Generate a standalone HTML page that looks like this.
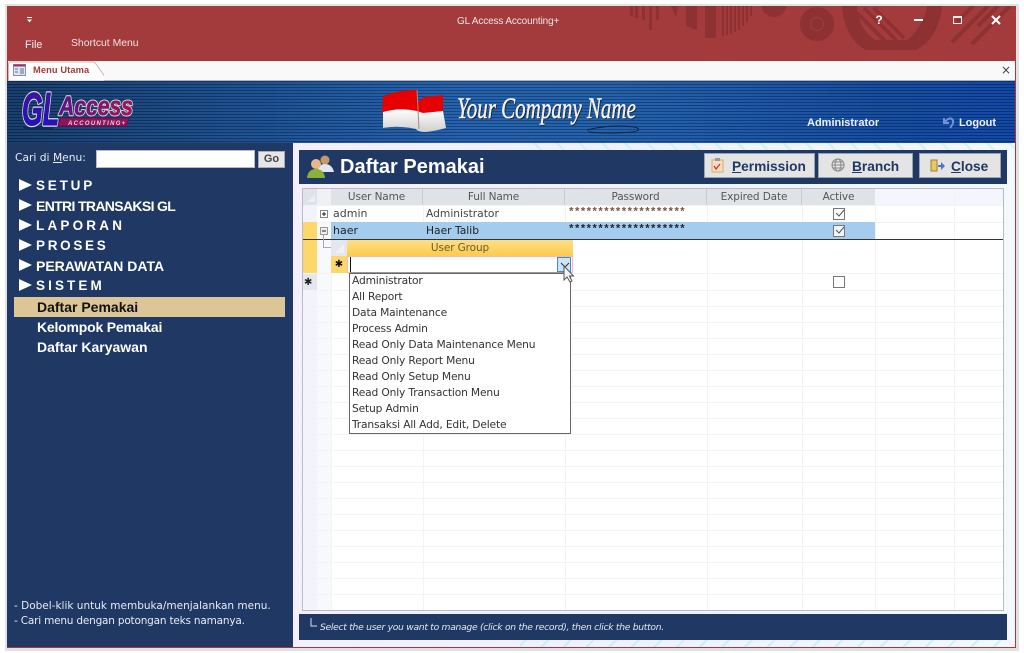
<!DOCTYPE html>
<html><head><meta charset="utf-8"><style>
html,body{margin:0;padding:0;background:#fff;}
body{width:1024px;height:653px;overflow:hidden;position:relative;font-family:"DejaVu Sans","Liberation Sans",sans-serif;}
div,span{position:absolute;white-space:nowrap;}
span.u{position:static;text-decoration:underline;}
.m{left:36px;color:#fff;font-weight:bold;font-size:13.5px;line-height:20px;height:20px;font-family:"Liberation Sans",sans-serif;}
.tri{left:19px;width:0;height:0;border-left:13px solid #fff;border-top:6px solid transparent;border-bottom:6px solid transparent;}
.sm{left:37px;color:#fff;font-weight:bold;font-size:14px;line-height:20px;font-family:"Liberation Sans",sans-serif;}
.hd{top:189px;height:16px;background:#dfe3e8;color:#555;font-size:10.5px;letter-spacing:-.12px;line-height:17px;text-align:center;font-family:"DejaVu Sans",sans-serif;border-right:1px solid #c8ccd0;box-sizing:border-box;}
.c{font-size:11px;line-height:16px;color:#444;}
.pw{left:568px;font:bold 11px/13px 'Liberation Mono';letter-spacing:-.75px;}
.btn{top:153px;height:25px;background:#e4e4e4;border:1px solid #9aa3b0;box-sizing:border-box;color:#1f3864;font-weight:bold;font-size:13.7px;line-height:25px;font-family:"Liberation Sans",sans-serif;}
.dd{left:352px;font-size:10.7px;letter-spacing:-.17px;line-height:16px;color:#333;}
.cb{width:10px;height:10px;border:1px solid #777;background:#fff;left:833px;}
</style></head><body>
<!-- shadow -->
<div style="left:5px;top:4px;width:1014px;height:647px;background:#e2e2e2;"></div>
<div style="left:7px;top:6px;width:1009px;height:642px;background:#a33a3c;"></div>
<!-- titlebar -->
<svg style="position:absolute;left:0;top:0" width="1024" height="61">
<defs><clipPath id="t"><rect x="630" y="6" width="386" height="54"/></clipPath></defs>
<g clip-path="url(#t)" fill="#8d3133">
<rect x="630" y="6" width="3" height="10"/><rect x="635" y="6" width="3" height="12"/><rect x="642" y="6" width="3" height="14"/><rect x="649" y="6" width="3" height="24"/><rect x="656" y="6" width="3" height="14"/>
<path d="M671 6h7l-2 11z"/>
<path d="M686 6h11v24l-11-4z"/><rect x="705" y="6" width="11" height="32"/>
<rect x="722" y="6" width="2" height="30"/><rect x="726" y="6" width="2" height="29"/><rect x="730" y="6" width="2" height="28"/><rect x="734" y="6" width="2" height="26"/><rect x="738" y="6" width="2" height="24"/><rect x="742" y="6" width="2" height="20"/><rect x="746" y="6" width="2" height="16"/><rect x="750" y="6" width="2" height="10"/>
<path d="M762 6h24a12 11 0 0 1-24 0z"/>
<circle cx="817" cy="24" r="12" fill="none" stroke="#8d3133" stroke-width="10"/><circle cx="817" cy="24" r="6"/>
<path d="M842 6h100c-2 24-14 38-26 44h-50c-12-6-22-20-24-44z"/>
<path d="M857 6h70c-2 16-14 30-20 34h-32c-10-6-18-20-18-34z" fill="#a33a3c"/>
<g stroke="#8d3133" stroke-width="3.5"><path d="M854 10l34 34M864 8l34 34M874 8l30 30"/></g>
<g stroke="#8d3133" stroke-width="4"><path d="M952 42l36-36M957 22l16-16M972 44l38-38M978 26l20-20"/></g>
</g>
<g fill="#fff"><rect x="27" y="17" width="5" height="1"/><path d="M27 19.500h5l-2.500 3z"/></g>
<text x="879" y="24" fill="#fff" font-family="Liberation Sans" font-weight="bold" font-size="12" text-anchor="middle">?</text>
<rect x="914" y="19" width="9" height="2" fill="#fff"/>
<rect x="953.500" y="16.500" width="8" height="7" fill="none" stroke="#eee"/><rect x="953" y="16" width="9" height="2" fill="#eee"/>
<path d="M992 16l8 8M1000 16l-8 8" stroke="#fff" stroke-width="2"/>
</svg>
<div style="left:457px;top:15px;color:#f2e4e4;font:10px/14px 'Liberation Sans';letter-spacing:-.13px;">GL Access Accounting+</div>
<div style="left:25px;top:38px;color:#fbeeee;font:10.800px/14px 'Liberation Sans';">File</div>
<div style="left:71px;top:37px;color:#f5e6e6;font:10.400px/14px 'Liberation Sans';">Shortcut Menu</div>
<!-- tab bar -->
<div style="left:8px;top:61px;width:1007px;height:19px;background:#f9f9f9;border-bottom:1px solid #b5b5b5;"></div>
<svg style="position:absolute;left:8px;top:60px" width="96" height="21"><path d="M0.500 21V4q0-2 2-2H85q2 0 3 2l12 17z" fill="#fff" stroke="#c9b5b5"/></svg>
<svg style="position:absolute;left:13px;top:64px" width="14" height="13"><rect x=".5" y=".5" width="12" height="11" fill="#dfe6f2" stroke="#8a8fa8"/><rect x=".5" y=".5" width="12" height="2" fill="#a03060"/><path d="M2 5h3M2 8h3M7 5h4M7 7h4M7 9h4" stroke="#5570a0"/></svg>
<div style="left:33px;top:64px;color:#a33a3c;font-size:9.300px;font-weight:bold;line-height:13px;font-family:'Liberation Sans';letter-spacing:.1px;">Menu Utama</div>
<div style="left:1001px;top:64px;color:#444;font-size:12px;line-height:12px;">×</div>
<!-- banner -->
<div style="left:7px;top:81px;width:1008px;height:62px;background:repeating-linear-gradient(180deg,rgba(0,0,0,.22) 0 1px,rgba(255,255,255,.05) 1px 3px),linear-gradient(90deg,#0f3566 0,#14498c 25%,#1c5aa8 45%,#1a5aa6 60%,#0d469a 85%,#063f9e 100%);"></div>
<!-- logo -->
<svg style="position:absolute;left:15px;top:84px" width="125" height="50" font-family="Liberation Sans" font-weight="bold" font-style="italic">
<defs>
<linearGradient id="g1" x1="0" y1="0" x2="0" y2="1"><stop offset="0" stop-color="#4a1490"/><stop offset="1" stop-color="#1a10c8"/></linearGradient>
<linearGradient id="g2" x1="0" y1="0" x2="1" y2="0"><stop offset="0" stop-color="#4a1a90"/><stop offset="1" stop-color="#a81450"/></linearGradient>
</defs>
<path d="M8 43h32l-2 2H10z" fill="#0a1c40" opacity=".6"/>
<text x="7" y="41" font-size="46" textLength="37" lengthAdjust="spacingAndGlyphs" fill="url(#g1)" stroke="#dcdcdc" stroke-width="3.500" paint-order="stroke" stroke-linejoin="round">GL</text>
<text x="7" y="41" font-size="46" textLength="37" lengthAdjust="spacingAndGlyphs" fill="url(#g1)" stroke="#2a12a8" stroke-width="1">GL</text>
<text x="44" y="31" font-size="27" textLength="74" lengthAdjust="spacingAndGlyphs" fill="url(#g2)" stroke="#dcdcdc" stroke-width="2.500" paint-order="stroke" stroke-linejoin="round">Access</text>
<text x="44" y="31" font-size="27" textLength="74" lengthAdjust="spacingAndGlyphs" fill="url(#g2)" stroke="#8a1466" stroke-width=".6">Access</text>
<path d="M46 34h68l-3 8H43z" fill="#90145a" stroke="#70104a"/>
<text x="53" y="41" font-size="6" fill="#e8d0e0" letter-spacing="1.300">ACCOUNTING+</text>
</svg>
<!-- flag -->
<svg style="position:absolute;left:380px;top:87px" width="70" height="47">
<defs><linearGradient id="fw" x1="0" y1="0" x2="0" y2="1"><stop offset="0" stop-color="#fff"/><stop offset="1" stop-color="#cfcfcf"/></linearGradient></defs>
<path d="M3 9Q18 3 37 3L38 15 44 10 63 8 63 26H2z" fill="#e60000"/>
<path d="M3 25Q20 20 37 24L43 26 63 24 66 41Q55 44 46 45 38 45 36 42 18 38 3 41z" fill="url(#fw)"/>
<path d="M37 3 39 42" stroke="#a88" stroke-width="1" fill="none"/>
</svg>
<div style="left:457px;top:89px;color:#f2efe8;font:italic 30px/40px 'Liberation Serif';transform:scaleX(.7);transform-origin:left;-webkit-text-stroke:.4px #fff;text-shadow:1px 1px 1px #111;">Your Company Name</div>
<svg style="position:absolute;left:585px;top:122px" width="60" height="14"><path d="M2 8Q25 2 50 5Q58 8 48 10Q25 12 3 10" fill="none" stroke="#0c2446" stroke-width="1"/></svg>
<div style="left:807px;top:116px;color:#eef;font:bold 11px/14px 'Liberation Sans';">Administrator</div>
<svg style="position:absolute;left:942px;top:115px" width="14" height="14"><path d="M2 3v5h5M3 7Q7 2 10 4q3 3-2 9" fill="none" stroke="#6f93d6" stroke-width="2"/></svg>
<div style="left:959px;top:116px;color:#eef;font:bold 11px/14px 'Liberation Sans';letter-spacing:-.05px;">Logout</div>
<!-- left panel -->
<div style="left:7px;top:143px;width:286px;height:505px;background:#1f3864;"></div>
<div style="left:15px;top:151px;color:#e8ecf4;font-size:10.700px;line-height:14px;">Cari di <span class="u">M</span>enu:</div>
<div style="left:96px;top:150px;width:159px;height:18px;background:#fff;border:1px solid #bbb;box-sizing:border-box;"></div>
<div style="left:258px;top:151px;width:27px;height:17px;background:#e6e6e6;border:1px solid #aaa;box-sizing:border-box;color:#444;font:bold 11px/15px 'Liberation Sans';text-align:center;">Go</div>
<div class="tri" style="top:179px"></div><div class="m" style="top:176px;letter-spacing:2.800px">SETUP</div>
<div class="tri" style="top:199px"></div><div class="m" style="top:196px;font-size:14px;letter-spacing:-.65px">ENTRI TRANSAKSI GL</div>
<div class="tri" style="top:219px"></div><div class="m" style="top:216px;letter-spacing:3.200px">LAPORAN</div>
<div class="tri" style="top:239px"></div><div class="m" style="top:236px;letter-spacing:2.700px">PROSES</div>
<div class="tri" style="top:259px"></div><div class="m" style="top:256px;font-size:14px">PERAWATAN DATA</div>
<div class="tri" style="top:279px"></div><div class="m" style="top:276px;letter-spacing:3.100px">SISTEM</div>
<div style="left:14px;top:297px;width:271px;height:20px;background:#dcc597;"></div>
<div class="sm" style="top:297px;color:#111">Daftar Pemakai</div>
<div class="sm" style="top:317px;letter-spacing:-.2px">Kelompok Pemakai</div>
<div class="sm" style="top:337px">Daftar Karyawan</div>
<div style="left:14px;top:599px;color:#e8ecf4;font-size:10.500px;line-height:15px;">- Dobel-klik untuk membuka/menjalankan menu.</div>
<div style="left:14px;top:614px;color:#e8ecf4;font-size:10.500px;letter-spacing:-.2px;line-height:15px;">- Cari menu dengan potongan teks namanya.</div>
<!-- right -->
<div style="left:293px;top:143px;width:722px;height:505px;background:linear-gradient(90deg,#f6eefc,#eef2fd 50%,#f2f8fc);"></div>
<div style="left:520px;top:143px;width:495px;height:7px;background:repeating-linear-gradient(45deg,transparent 0 14px,rgba(120,220,200,.22) 14px 16px);"></div>
<div style="left:520px;top:640px;width:495px;height:7px;background:repeating-linear-gradient(-45deg,transparent 0 14px,rgba(120,220,220,.28) 14px 16px);"></div>
<div style="left:299px;top:150px;width:708px;height:34px;background:#1f3864;"></div>
<svg style="position:absolute;left:306px;top:153px" width="28" height="26"><circle cx="19" cy="7" r="4.500" fill="#c8986a"/><path d="M11 19Q12 11 19 11T28 19z" fill="#dfe6ee"/><circle cx="10" cy="11" r="5" fill="#e8b888"/><path d="M1 25Q2 16 10 16T19 25z" fill="#8db03c"/></svg>
<div style="left:340px;top:155px;color:#fff;font:bold 20px/24px 'Liberation Sans';">Daftar Pemakai</div>
<div class="btn" style="left:704px;width:111px;"><span style="left:27px;top:0;"><span class="u">P</span>ermission</span></div>
<svg style="position:absolute;left:711px;top:157px" width="14" height="16"><rect x="1" y="3" width="11" height="12" fill="#f6e0c0" stroke="#e0a860"/><rect x="4" y="1" width="5" height="3" fill="#999"/><path d="M3 9l2 3 4-5" stroke="#d03030" fill="none" stroke-width="1.300"/></svg>
<div class="btn" style="left:818px;width:95px;"><span style="left:33px;top:0;"><span class="u">B</span>ranch</span></div>
<svg style="position:absolute;left:831px;top:158px" width="14" height="14"><g fill="none" stroke="#888"><circle cx="7" cy="7" r="6"/><ellipse cx="7" cy="7" rx="3" ry="6"/><path d="M1 7h12M2 4h10M2 10h10"/></g></svg>
<div class="btn" style="left:919px;width:82px;"><span style="left:31px;top:0;"><span class="u">C</span>lose</span></div>
<svg style="position:absolute;left:930px;top:159px" width="15" height="14"><rect x="1" y="1" width="6" height="11" fill="#e8c860" stroke="#a08030"/><path d="M8 6h3V3l4 4-4 4V8H8z" fill="#4a78c0"/></svg>
<!-- grid -->
<div style="left:302px;top:188px;width:702px;height:423px;background:#fff;border:1px solid #b5bcc6;box-sizing:border-box;"></div>
<svg style="position:absolute;left:303px;top:189px" width="700" height="421">
<rect width="14" height="421" fill="#f3f4fb"/><rect x="14" width="14" height="421" fill="#f8f9fd"/>
<rect x="572" width="128" height="16" fill="#f5f6fd"/>
<g stroke="#f3f3f3"><path d="M0 16.500H700M0 33.500H700M0 84.500H700M0 101.500H700M0 117.500H700M0 133.500H700M0 149.500H700M0 165.500H700M0 181.500H700M0 197.500H700M0 213.500H700M0 229.500H700M0 245.500H700M0 261.500H700M0 277.500H700M0 293.500H700M0 309.500H700M0 325.500H700M0 341.500H700M0 357.500H700M0 373.500H700M0 389.500H700M0 405.500H700"/>
<path d="M28.500 85V421M120.500 16V421M262.500 16V50M404.500 16V421M499.500 16V421M572.500 16V421M651.500 0V421M262.500 85V421"/></g>
<rect x="14" width="14" height="16" fill="#f0f1f5"/><rect width="14" height="16" fill="#dfe3e8"/>
<path d="M4 13L12 5V13z" fill="#eceef2"/>
<rect y="33" width="14" height="51" fill="#fdd76a"/>
<rect y="85" width="14" height="16" fill="#e4e7eb"/>
<rect x="14" y="17" width="14" height="16" fill="#fff"/>
<rect x="28" y="33" width="544" height="17" fill="#a3ccee"/>
<path d="M0 50.500H700" stroke="#333"/>
<rect x="17.500" y="21.500" width="7" height="7" fill="#fff" stroke="#888"/><path d="M19 25h4M21 23v4" stroke="#222"/>
<rect x="17.500" y="38.500" width="7" height="7" fill="#eee" stroke="#999"/><path d="M19 42h4" stroke="#222"/>
<path d="M20.500 46v12.500h7.500" stroke="#aaa" fill="none"/>
</svg>
<div class="hd" style="left:331px;width:92px;">User Name</div>
<div class="hd" style="left:423px;width:142px;">Full Name</div>
<div class="hd" style="left:565px;width:142px;">Password</div>
<div class="hd" style="left:707px;width:95px;">Expired Date</div>
<div class="hd" style="left:802px;width:73px;border:0;">Active</div>
<div class="c" style="left:333px;top:206px;">admin</div>
<div class="c" style="left:426px;top:206px;font-size:10.700px">Administrator</div>
<div class="c pw" style="top:207px;color:#7a5040;">********************</div>
<div class="c" style="left:333px;top:223px;color:#222">haer</div>
<div class="c" style="left:426px;top:223px;color:#222;font-size:10.700px">Haer Talib</div>
<div class="c pw" style="top:224px;color:#223;">********************</div>
<div class="cb" style="top:208px"></div><div class="cb" style="top:225px;background:#eef4fa"></div><div class="cb" style="top:276px"></div>
<svg style="position:absolute;left:834px;top:208px" width="12" height="30"><path d="M2 5l3 3 5-6M2 22l3 3 5-6" stroke="#555" fill="none"/></svg>
<div style="left:304px;top:275px;color:#222;font:10px/16px 'DejaVu Sans';">✱</div>
<!-- subform -->
<div style="left:331px;top:239px;width:242px;height:35px;background:#fff;border-top:1px solid #333;box-sizing:border-box;"></div>
<div style="left:331px;top:240px;width:16px;height:16px;background:#e4e7eb;"></div>
<svg style="position:absolute;left:331px;top:240px" width="16" height="16"><path d="M4 13L13 4V13z" fill="#f0f1f4"/></svg>
<div style="left:347px;top:240px;width:226px;height:16px;background:linear-gradient(#fedf85,#fdcb4e);color:#6a5a30;font-size:10.500px;letter-spacing:-.1px;line-height:17px;text-align:center;">User Group</div>
<div style="left:331px;top:256px;width:16px;height:17px;background:#fdd76a;color:#111;font:10px/17px 'DejaVu Sans';text-align:center;">✱</div>
<div style="left:347px;top:256px;width:226px;height:17px;background:#fff;border:1px solid #f3b8b8;box-sizing:border-box;"></div>
<div style="left:350px;top:257px;width:1px;height:15px;background:#111;"></div>
<div style="left:350px;top:272px;width:221px;height:2px;background:#999;"></div>
<div style="left:557px;top:257px;width:14px;height:15px;background:#cfe4f7;border:1px solid #3d8ad0;box-sizing:border-box;"></div>
<!-- dropdown -->
<div style="left:349px;top:273px;width:222px;height:161px;background:#fff;border:1px solid #666;box-sizing:border-box;"></div>
<div class="dd" style="top:273px">Administrator</div>
<div class="dd" style="top:289px">All Report</div>
<div class="dd" style="top:305px">Data Maintenance</div>
<div class="dd" style="top:321px">Process Admin</div>
<div class="dd" style="top:337px">Read Only Data Maintenance Menu</div>
<div class="dd" style="top:353px">Read Only Report Menu</div>
<div class="dd" style="top:369px">Read Only Setup Menu</div>
<div class="dd" style="top:385px">Read Only Transaction Menu</div>
<div class="dd" style="top:401px">Setup Admin</div>
<div class="dd" style="top:417px">Transaksi All Add, Edit, Delete</div>
<svg style="position:absolute;left:558px;top:258px" width="18" height="26"><path d="M3 5l4 4 4-4" stroke="#333" fill="none"/><path d="M6 8v14l3-3 3 5 2-1-2.500-5h4z" fill="#f4f4f4" stroke="#555"/></svg>
<!-- footer -->
<div style="left:299px;top:614px;width:708px;height:26px;background:#1f3864;"></div>
<svg style="position:absolute;left:309px;top:617px" width="10" height="12"><path d="M2 1v8h6" stroke="#dde" fill="none"/></svg>
<div style="left:320px;top:621px;color:#e4e8f0;font:italic 9.200px/14px 'DejaVu Sans';letter-spacing:-.29px;">Select the user you want to manage (click on the record), then click the button.</div>
<div style="left:7px;top:647px;width:1009px;height:1px;background:#a33a3c;"></div>
</body></html>
